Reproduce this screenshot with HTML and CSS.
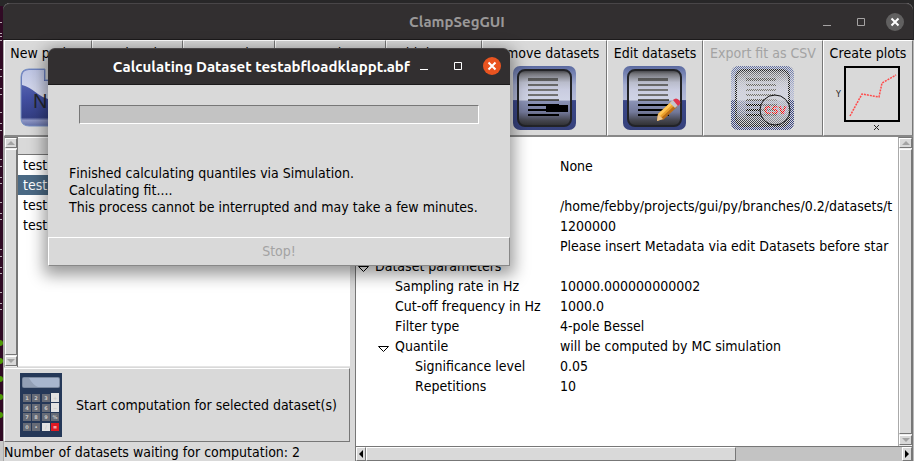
FILE: index.html
```html
<!DOCTYPE html>
<html lang="en">
<head>
<meta charset="utf-8">
<title>ClampSegGUI</title>
<link rel="stylesheet" href="styles.css">
</head>
<body>
<svg class="defs" width="0" height="0" aria-hidden="true">
  <defs>
    <linearGradient id="frame" x1="0" y1="0" x2="0" y2="1">
      <stop offset="0" stop-color="#5b6aa0"/><stop offset=".3" stop-color="#a3acd0"/><stop offset=".53" stop-color="#b4bad8"/><stop offset=".54" stop-color="#3a4788"/><stop offset="1" stop-color="#37427c"/>
    </linearGradient>
    <linearGradient id="glass" x1="0" y1="0" x2="0" y2="1">
      <stop offset="0" stop-color="#3a3a3e"/><stop offset=".07" stop-color="#75767c"/><stop offset=".22" stop-color="#b9bccb"/><stop offset=".35" stop-color="#c9cce0"/><stop offset=".54" stop-color="#d0d4e6"/><stop offset=".55" stop-color="#8b93b6"/><stop offset=".75" stop-color="#73799a"/><stop offset=".9" stop-color="#45464f"/><stop offset="1" stop-color="#2e2e30"/>
    </linearGradient>
    <linearGradient id="rules" gradientUnits="userSpaceOnUse" x1="0" y1="12" x2="0" y2="38">
      <stop offset="0" stop-color="#555"/><stop offset=".5" stop-color="#777"/><stop offset=".8" stop-color="#6b6b6b"/><stop offset="1" stop-color="#000"/>
    </linearGradient>
    <linearGradient id="blue" x1="0" y1="0" x2="0" y2="1">
      <stop offset="0" stop-color="#6878bd"/><stop offset=".5" stop-color="#4350a2"/><stop offset=".85" stop-color="#343f84"/><stop offset=".9" stop-color="#8e97c4"/><stop offset="1" stop-color="#6672aa"/>
    </linearGradient>
    <linearGradient id="shine" x1="0" y1="0" x2="0" y2="1">
      <stop offset="0" stop-color="#c9cfe9"/><stop offset="1" stop-color="#f0f1f8"/>
    </linearGradient>
    <pattern id="stipple" width="2" height="2" patternUnits="userSpaceOnUse">
      <path d="M0 0h1v1H0zM1 1h1v1H1z" fill="#d9d9d9"/>
    </pattern>
    <symbol id="doc" viewBox="0 0 64 64">
      <rect width="63" height="64" rx="7" fill="url(#frame)"/>
      <rect x="5" y="4" width="53" height="56" rx="7" fill="url(#glass)" stroke="#222327" stroke-width="2"/>
      <path d="M15 12h30v3H15zM15 18h30v2H15zM15 23h30v2H15zM15 28h30v2H15zM15 33h31v2H15z" fill="url(#rules)"/>
      <path d="M15 38h31v2H15zM15 43h31v2H15zM15 48h31v2H15z"/>
    </symbol>
    <symbol id="new" viewBox="0 0 64 60">
      <path d="M9 1h16v11h38v39q0 7-8 7H9q-8 0-8-8V9q0-8 8-8z" fill="url(#blue)" stroke="#7891c4" stroke-width="1"/>
      <path d="M9 2h15v11h38v20Q30 36 18 26 8 18 2 17V9q0-7 7-7z" fill="url(#shine)" opacity=".9"/>
    </symbol>
  </defs>
</svg>

<div class="desktop">
  <div class="terminal">
    <svg width="3" height="461" aria-hidden="true">
      <g stroke="#b9aeb6" stroke-width="1">
        <path d="M0 22.500h2M0 33.500h2M0 36.500h2M0 40.500h2M0 69.500h2M0 76.500h2M0 88.500h2M0 94.500h2M0 112.500h2M0 123.500h2M0 130.500h2M0 159.500h2M0 166.500h2M0 177.500h2M0 183.500h2M0 202.500h2M0 213.500h2M0 219.500h2M0 249.500h2M0 256.500h2M0 267.500h2M0 273.500h2M0 292.500h2M0 303.500h2M0 309.500h2"/>
      </g>
      <g fill="#4e9a06"><circle cy="343" r="3"/><circle cy="361" r="3"/><circle cy="379" r="3"/><circle cy="397" r="3"/><circle cy="415" r="3"/></g>
    </svg>
  </div>
  <main class="window">
    <header class="titlebar inactive">
      <h1>ClampSegGUI</h1>
      <div class="controls">
        <button aria-label="Minimize"><svg width="20" height="20"><path d="M6 13.500h8"/></svg></button>
        <button aria-label="Maximize"><svg width="20" height="20"><path d="M6.500 6.500h7v7h-7z"/></svg></button>
        <button aria-label="Close"><svg width="20" height="20"><circle cx="10" cy="10" r="9"/><path class="cross" d="M6.500 6.500l7 7M13.500 6.500l-7 7"/></svg></button>
      </div>
    </header>

    <nav class="toolbar">
      <button>New project
        <svg width="64" height="64" viewBox="0 0 64 64"><use href="#new" x="4" y="2" width="64" height="60"/><text class="newtext" x="17" y="42">NEW</text></svg></button>
      <button>Load project</button>
      <button>Save project</button>
      <button>Save project as</button>
      <button>Add datasets</button>
      <button>Remove datasets
        <svg width="64" height="64"><use href="#doc" width="64" height="64"/><path d="M33 40h12v-1h10v7H33z"/></svg></button>
      <button>Edit datasets
        <svg width="64" height="64"><use href="#doc" width="64" height="64"/>
          <path d="M35 48L49 35l5 5-14 13-6 2z" fill="#eba02c"/><path d="M35 48l14-13 2 2-14 13z" fill="#ffc657"/><path d="M38 52l14-13 2 2-14 13z" fill="#b96d17"/><path d="M35 48l5 5-6 2z" fill="#efc58b"/><path d="M47 37l4-4 5 5-4 4z" fill="#c5c6cc"/><path d="M50 34q3-3 6 0t-1 6z" fill="#e0344e"/></svg></button>
      <button disabled>Export fit as CSV
        <svg width="64" height="64"><use href="#doc" width="64" height="64"/><circle cx="44" cy="44" r="15" fill="#c6c8d2" fill-opacity=".5"/><text class="csvtext" x="33" y="48">CSV</text><rect width="64" height="64" fill="url(#stipple)"/><circle cx="44" cy="44" r="15" fill="none" stroke="#111" stroke-width="1"/></svg></button>
      <button>Create plots
        <svg width="64" height="64"><rect x="9" y="1" width="54" height="54" fill="none" stroke="#000" stroke-width="2"/><path d="M14 50L26 28 43 31 46 17 60 9" fill="none" stroke="#ff4a4a" stroke-width="1.500" stroke-dasharray="2 1"/><text class="axis" x="0" y="31">Y</text><path d="M38 59l5 5M43 59l-5 5" stroke="#222"/></svg></button>
    </nav>

    <div class="content">
      <section class="left">
        <div class="listwrap">
          <div class="vscroll"><i class="arrow up"></i><i class="thumb"></i><i class="arrow down"></i></div>
          <div class="list">
            <div class="listhead"></div>
            <ul>
              <li>test</li>
              <li class="selected">test</li>
              <li>test</li>
              <li>test</li>
            </ul>
          </div>
        </div>
        <button class="start">
          <svg width="42" height="64" viewBox="0 0 42 64" aria-hidden="true">
            <rect width="42" height="64" fill="#253858"/>
            <rect x="2" y="4" width="38" height="11" rx="2" fill="#7b899f"/><rect x="3" y="5" width="36" height="9" rx="1" fill="#a8b6ce"/><path d="M3 5h6q4 7 9 9H3z" fill="#929fb5"/>
            <path d="M3 21h8v8H3zM12 21h8v8h-8zM22 21h8v8h-8zM3 31h8v8H3zM12 31h8v8h-8zM22 31h8v8h-8zM3 40h8v8H3zM12 40h8v8h-8zM22 40h8v8h-8zM31 40h8v8h-8zM3 50h8v8H3zM12 50h8v8h-8z" fill="#666b76"/>
            <path d="M31 20h8v9h-8zM31 30h8v9h-8zM22 50h8v8h-8z" fill="#e2e2e2"/><path d="M31 50h8v8h-8z" fill="#df1a22"/>
            <g class="keys"><text x="7" y="27">1</text><text x="16" y="27">2</text><text x="26" y="27">3</text><text x="35" y="27">+</text><text x="7" y="37">4</text><text x="16" y="37">5</text><text x="26" y="37">6</text><text x="35" y="37">−</text><text x="7" y="46">7</text><text x="16" y="46">8</text><text x="26" y="46">9</text><text x="35" y="46">%</text><text x="7" y="56">0</text><text x="16" y="56">•</text><text x="26" y="56">/</text><text class="equals" x="35" y="56">=</text></g>
          </svg>
          Start computation for selected dataset(s)
        </button>
        <p class="status">Number of datasets waiting for computation: 2</p>
      </section>

      <section class="right">
        <div class="treewrap">
          <div class="tree">
            <table>
              <colgroup><col class="namecol"><col></colgroup>
              <tbody>
                <tr><td></td><td>None</td></tr>
                <tr><td></td><td></td></tr>
                <tr><td></td><td>/home/febby/projects/gui/py/branches/0.2/datasets/t</td></tr>
                <tr><td></td><td>1200000</td></tr>
                <tr><td></td><td>Please insert Metadata via edit Datasets before star</td></tr>
                <tr><td class="l1"><svg width="11" height="7"><path d="M.5.500h10l-5 5z"/></svg>Dataset parameters</td><td></td></tr>
                <tr><td class="l2">Sampling rate in Hz</td><td>10000.000000000002</td></tr>
                <tr><td class="l2">Cut-off frequency in Hz</td><td>1000.0</td></tr>
                <tr><td class="l2">Filter type</td><td>4-pole Bessel</td></tr>
                <tr><td class="l2"><svg width="11" height="7"><path d="M.5.500h10l-5 5z"/></svg>Quantile</td><td>will be computed by MC simulation</td></tr>
                <tr><td class="l3">Significance level</td><td>0.05</td></tr>
                <tr><td class="l3">Repetitions</td><td>10</td></tr>
              </tbody>
            </table>
          </div>
          <div class="vscroll"><i class="arrow up"></i><i class="thumb"></i><i class="arrow down"></i></div>
        </div>
        <div class="hscroll"><i class="arrow back"></i><i class="thumb"></i><i class="trough"></i><i class="arrow next"></i></div>
      </section>
    </div>
  </main>
</div>

<div class="dialog" role="dialog" aria-labelledby="dialog-title">
  <header class="titlebar">
    <h2 id="dialog-title">Calculating Dataset testabfloadklappt.abf</h2>
    <div class="controls">
      <button aria-label="Minimize"><svg width="20" height="20"><path d="M6 12.500h8"/></svg></button>
      <button aria-label="Maximize"><svg width="20" height="20"><path d="M6.500 5.500h7v7h-7z"/></svg></button>
      <button aria-label="Close"><svg width="20" height="20"><circle cx="10" cy="9" r="9"/><path class="cross" d="M6.500 5.500l7 7M13.500 5.500l-7 7"/></svg></button>
    </div>
  </header>
  <div class="progress" role="progressbar" aria-label="Progress"></div>
  <p>Finished calculating quantiles via Simulation.<br>Calculating fit....<br>This process cannot be interrupted and may take a few minutes.</p>
  <button class="stop" disabled>Stop!</button>
</div>
</body>
</html>
```
FILE: styles.css
```css
* { box-sizing: border-box; }
body {
  margin: 0;
  background: #282728;
  color: #000;
  font: 14px/17px "DejaVu Sans Condensed", "DejaVu Sans", sans-serif;
  font-kerning: none;
  overflow: hidden;
}
button { font: inherit; color: inherit; margin: 0; padding: 0; border: 0; background: none; }
h1, h2, p, ul { margin: 0; padding: 0; }
svg { display: block; overflow: visible; flex: none; }
.defs { position: absolute; }

.desktop { display: flex; height: 100vh; padding: 3px 1px 0 0; background: linear-gradient(#282728 40px, #b9b9b9 40px); }
.terminal { width: 3px; margin-top: 3px; overflow: hidden; background: linear-gradient(#300a24 435px, #c8c8c8 435px); }
.terminal svg { margin-top: -6px; }
.window { flex: 1; min-width: 0; display: flex; flex-direction: column; background: #d9d9d9; border-left: 1px solid #aaa; border-radius: 7px 7px 0 0; }

.titlebar { display: flex; align-items: center; height: 37px; border-radius: 7px 7px 0 0; background: #322f30; border-top: 1px solid #494648; border-bottom: 1px solid #1c1a1b; color: #fff; }
.titlebar h1, .titlebar h2 { flex: 1; font: bold 15px/20px Ubuntu, "Noto Sans", sans-serif; white-space: nowrap; }
.controls { display: flex; gap: 14px; }
.controls button { width: 20px; height: 20px; }
.controls path { fill: none; stroke: #fff; }
.controls circle { fill: #e95420; }
.controls .cross { stroke-width: 2; }
.inactive { margin-left: -1px; color: #9a9898; }
.inactive h1 { text-align: center; padding-left: 94px; }
.inactive .controls { padding-right: 8px; }
.inactive .controls path { stroke: #a5a3a3; }
.inactive .controls circle { fill: #616060; }
.inactive .controls .cross { stroke: #fff; }

.toolbar { display: grid; grid-template-columns: 88fr 91fr 92fr 111fr 96fr 125fr 96fr 120fr 90fr; height: 97px; border-bottom: 1px solid #888; }
.toolbar button { display: flex; flex-direction: column; align-items: center; gap: 4px; padding-top: 4px; white-space: nowrap; border: 1px solid; border-color: #fff #777 #888 #fff; min-width: 0; }
.toolbar button:disabled { color: #a3a3a3; }
.newtext { font: 20px "Liberation Sans", sans-serif; fill: #24262c; }
.csvtext { font: bold 10px "DejaVu Sans", sans-serif; fill: #f00; }
.axis { font: 8px "DejaVu Sans", sans-serif; fill: #222; }

.content { flex: 1; min-height: 0; display: grid; grid-template-columns: 346fr 558fr; column-gap: 5px; }
.left, .right { display: flex; flex-direction: column; min-width: 0; min-height: 0; }
.listwrap { flex: 1; display: flex; min-height: 0; }
.list { flex: 1; background: #fff; border-bottom: 1px solid #e5e5e5; }
.listhead { height: 18px; background: #d9d9d9; border-bottom: 1px solid #777; border-top: 1px solid #fff; }
.list li { list-style: none; height: 20px; line-height: 20px; padding-left: 5px; }
.list .selected { background: #4a6984; color: #fff; }

.vscroll { width: 14px; display: flex; flex-direction: column; gap: 1px; padding-bottom: 1px; border: 1px solid #777; border-bottom: 0; border-left-color: #aaa; background: #eee; }
.right .vscroll { width: 15px; }
.thumb { flex: 1; background: #d9d9d9; border: 1px solid; border-color: #fff #777 #777 #fff; }
.arrow { height: 10px; display: flex; align-items: center; justify-content: center; background: #d9d9d9; border: 1px solid; border-color: #fff #777 #777 #fff; }
.arrow::before { content: ""; border: 4px solid transparent; border-top-width: 0; border-bottom: 4px solid #a3a3a3; }
.down::before { transform: rotate(180deg); }
.hscroll { display: flex; height: 15px; border: 1px solid #777; border-bottom: 0; background: #c3c3c3; }
.hscroll .arrow { width: 10px; height: auto; }
.hscroll .arrow::before { border: 4px solid transparent; border-left-width: 0; border-right: 4px solid #000; }
.hscroll .next::before { transform: rotate(180deg); }
.hscroll .thumb { flex: 69; }
.trough { flex: 31; }

.start { display: flex; align-items: center; gap: 14px; height: 74px; margin-top: 1px; padding-left: 15px; border: 1px solid; border-color: #fff #777 #777 #fff; white-space: nowrap; }
.keys { font: bold 5px "DejaVu Sans", sans-serif; fill: #c8c8c8; text-anchor: middle; }
.equals { fill: #fff; }
.status { height: 19px; line-height: 20px; white-space: nowrap; }

.treewrap { flex: 1; display: flex; min-height: 0; }
.tree { flex: 1; min-width: 0; overflow: hidden; background: #fff; border-left: 1px solid #777; padding-top: 19px; }
table { width: 100%; table-layout: fixed; border-collapse: collapse; }
.namecol { width: 204px; }
td { height: 20px; padding: 0; line-height: 20px; white-space: nowrap; }
td svg { float: left; margin: 10px 6px 0 -17px; fill: #fff; stroke: #000; }
.l1 { padding-left: 19px; }
.l2 { padding-left: 39px; }
.l3 { padding-left: 59px; }

.dialog { position: absolute; left: 48px; top: 48px; width: 462px; background: #d9d9d9; border-radius: 7px 7px 0 0; box-shadow: 0 5px 16px 4px rgba(0, 0, 0, .4); }
.dialog h2 { text-align: right; }
.dialog .controls { padding: 0 8px 0 4px; }
.progress { margin: 20px 31px 0; height: 19px; background: #c3c3c3; border: 1px solid; border-color: #777 #fff #fff #777; }
.dialog p { padding: 41px 21px 21px; white-space: nowrap; }
.stop { display: block; width: 100%; height: 29px; color: #a3a3a3; border: 1px solid; border-color: #fff #888 #888 #fff; }
```
